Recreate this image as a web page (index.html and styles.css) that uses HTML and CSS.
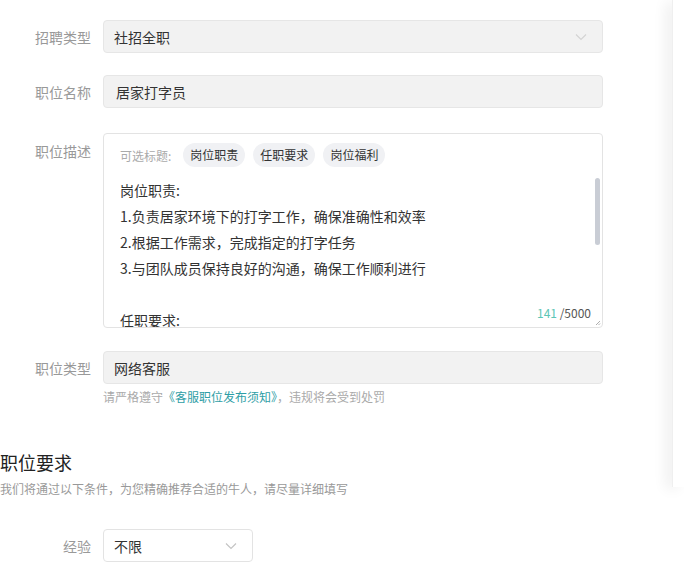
FILE: index.html
```html
<!DOCTYPE html>
<html lang="zh-CN">
<head>
  <meta charset="UTF-8">
  <title>发布职位</title>
  <link rel="stylesheet" href="styles.css">
</head>
<body>
  <div class="page">
    <div class="main">
      <div class="form-row first">
        <label class="form-label">招聘类型</label>
        <div class="field select disabled">
          <span>社招全职</span>
          <svg class="chevron" width="12" height="8" viewBox="0 0 12 8"><path d="M1 1.5l5 5 5-5" fill="none" stroke="#d4d4d4" stroke-width="1.2"/></svg>
        </div>
      </div>

      <div class="form-row">
        <label class="form-label">职位名称</label>
        <div class="field disabled"><span class="name-text">居家打字员</span></div>
      </div>

      <div class="form-row desc-row">
        <label class="form-label top">职位描述</label>
        <div class="field textarea">
          <div class="tag-bar">
            <span class="tag-hint">可选标题:</span>
            <span class="tag">岗位职责</span>
            <span class="tag">任职要求</span>
            <span class="tag">岗位福利</span>
          </div>
          <div class="desc-text">
            <p>岗位职责:</p>
            <p>1.负责居家环境下的打字工作，确保准确性和效率</p>
            <p>2.根据工作需求，完成指定的打字任务</p>
            <p>3.与团队成员保持良好的沟通，确保工作顺利进行</p>
            <p>&nbsp;</p>
            <p>任职要求:</p>
          </div>
          <div class="scroll-thumb"></div>
          <div class="counter"><span class="count">141</span> /5000</div>
          <svg class="resize" width="6" height="6" viewBox="0 0 6 6"><path d="M5 1L1 5M5 3.5L3.5 5" stroke="#999" stroke-width="0.8"/></svg>
        </div>
      </div>

      <div class="form-row type-row">
        <label class="form-label">职位类型</label>
        <div class="field disabled"><span>网络客服</span></div>
      </div>
      <div class="form-hint">请严格遵守<a href="#">《客服职位发布须知》</a>，违规将会受到处罚</div>

      <h3 class="section-title">职位要求</h3>
      <div class="section-sub">我们将通过以下条件，为您精确推荐合适的牛人，请尽量详细填写</div>

      <div class="form-row exp-row">
        <label class="form-label">经验</label>
        <div class="field select small">
          <span>不限</span>
          <svg class="chevron" width="12" height="8" viewBox="0 0 12 8"><path d="M1 1.5l5 5 5-5" fill="none" stroke="#c4c4c4" stroke-width="1.2"/></svg>
        </div>
      </div>
    </div>
    <div class="side-panel"></div>
  </div>
</body>
</html>
```

FILE: styles.css
```css
body {
  margin: 0;
  background: #fff;
  font-family: "Noto Sans CJK SC", "Noto Sans", sans-serif;
  color: #333;
  font-size: 14px;
}
.page {
  display: flex;
  align-items: flex-start;
}
.main {
  width: 672px;
  flex: none;
}
.side-panel {
  width: 12px;
  height: 487px;
  background: #fff;
  border-left: 1px solid #efefef;
  box-shadow: -6px 2px 14px rgba(0,0,0,0.07);
}
.form-row {
  display: flex;
  align-items: center;
  margin-top: 22px;
}
.form-row.first {
  margin-top: 20px;
}
.form-label {
  width: 103px;
  padding-right: 12px;
  box-sizing: border-box;
  text-align: right;
  color: #999;
  font-size: 14px;
  flex: none;
}
.field {
  width: 500px;
  height: 33px;
  box-sizing: border-box;
  border: 1px solid #e6e6e6;
  border-radius: 4px;
  display: flex;
  align-items: center;
  padding: 0 10px;
  color: #333;
}
.field.disabled {
  background: #f2f2f2;
}
.name-text {
  padding-left: 2px;
}
.select {
  justify-content: space-between;
}
.chevron {
  margin-right: 5px;
}
.desc-row {
  margin-top: 25px;
  align-items: flex-start;
}
.form-label.top {
  padding-top: 8px;
}
.field.textarea {
  height: 195px;
  display: block;
  position: relative;
  overflow: hidden;
  padding: 9px 16px 0 16px;
  border-color: #e3e3e3;
}
.tag-bar {
  display: flex;
  align-items: center;
  gap: 8px;
  font-size: 12px;
}
.tag-hint {
  color: #aaa;
  margin-right: 4px;
}
.tag {
  background: #f0f1f4;
  border-radius: 12px;
  height: 24px;
  line-height: 24px;
  padding: 0 7px;
  color: #333;
}
.desc-text {
  margin-top: 10px;
  line-height: 26px;
}
.desc-text p {
  margin: 0;
}
.scroll-thumb {
  position: absolute;
  right: 2px;
  top: 44px;
  width: 5px;
  height: 67px;
  border-radius: 3px;
  background: #c9cdd5;
}
.counter {
  position: absolute;
  right: 11px;
  bottom: 5px;
  font-size: 12px;
  color: #555;
  background: #fff;
  line-height: 18px;
  padding-left: 4px;
}
.count {
  color: #5cc6b6;
}
.resize {
  position: absolute;
  right: 1px;
  bottom: 1px;
}
.form-row.type-row {
  margin-top: 23px;
}
.form-row.exp-row {
  margin-top: 31px;
}
.form-hint {
  margin-top: 4px;
  padding-left: 103px;
  font-size: 12px;
  line-height: 18px;
  color: #aaa;
}
.form-hint a {
  color: #2f9ea6;
  text-decoration: none;
}
.section-title {
  margin: 43px 0 0 0;
  font-size: 18px;
  line-height: 26px;
  font-weight: 400;
  color: #222;
}
.section-sub {
  margin-top: 5px;
  font-size: 12px;
  line-height: 18px;
  color: #999;
}
.field.small {
  width: 150px;
  border-color: #e3e3e3;
}
```
